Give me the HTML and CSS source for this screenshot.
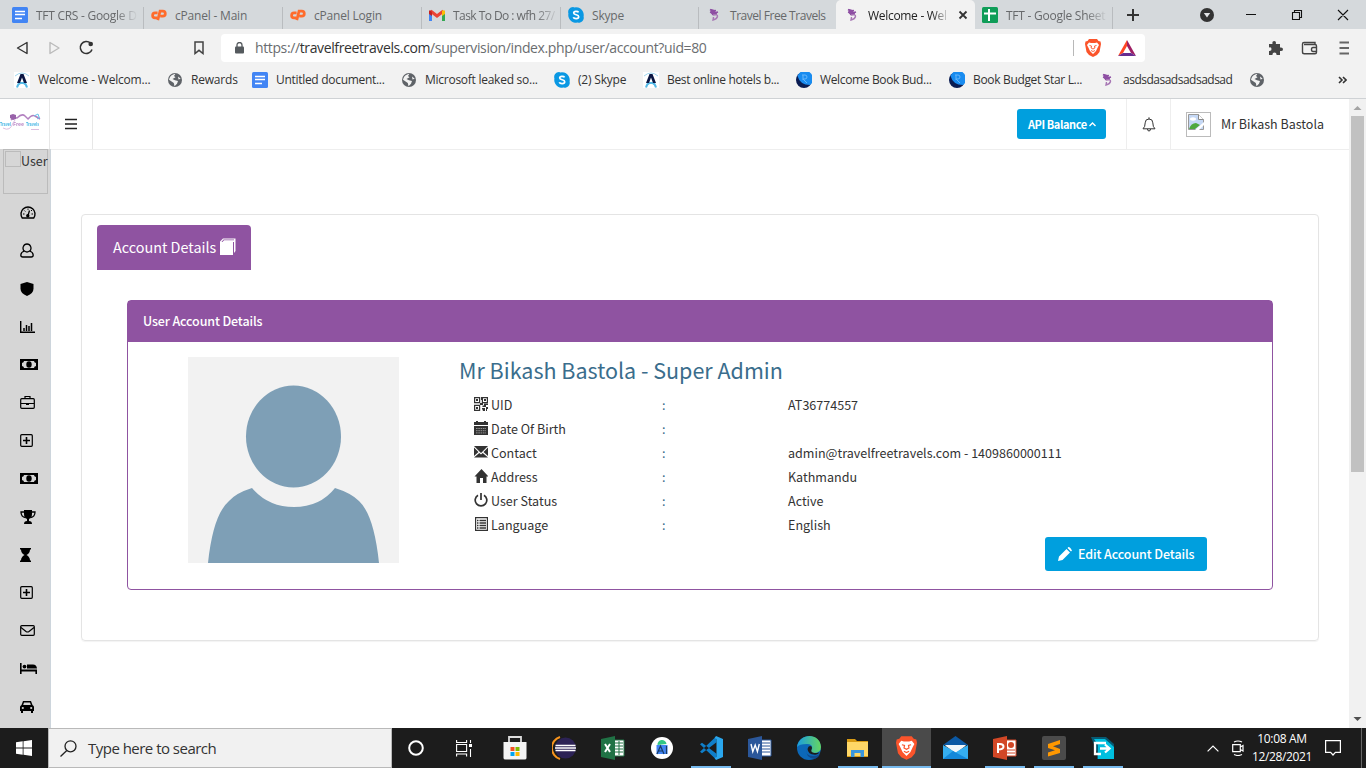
FILE: index.html
```html
<!DOCTYPE html>
<html lang="en">
<head>
<meta charset="utf-8">
<title>Welcome - Welcome Travel Free Travels</title>
<link rel="stylesheet" href="styles.css">
</head>
<body>
<svg class="defs" width="0" height="0">
  <symbol id="docs" viewBox="0 0 16 16"><rect width="16" height="16" rx="1.5" fill="#4285f4"/><path d="M3 4.500h10M3 7.500h10M3 11.500h7" stroke="#fff" stroke-width="1.500"/></symbol>
  <symbol id="cp" viewBox="0 0 17 12"><g fill="none" stroke="#ff6c2c" stroke-width="2.900"><path d="M7 3.800H4.300a2.600 2.600 0 0 0 0 5.200h2.200"/><path d="M7.200 11.500L9.600 2h3a2.600 2.600 0 0 1 0 5.200h-2.800"/></g></symbol>
  <symbol id="gmail" viewBox="0 0 16 12"><path d="M1.500 12V2" stroke="#4285f4" stroke-width="3"/><path d="M14.500 12V4" stroke="#34a853" stroke-width="3"/><path d="M1.500 2L8 7l6.500-5" fill="none" stroke="#ea4335" stroke-width="3.200"/><path d="M13 1.500h3V5l-3 2z" fill="#fbbc04"/><path d="M0 1.500h2L3 4v3L0 5z" fill="#c5221f"/></symbol>
  <symbol id="skype" viewBox="0 0 16 16"><path d="M5 0a5 5 0 0 0-4.600 6.500A7.800 7.800 0 0 0 9.500 15.600 5 5 0 0 0 15.600 9.500 7.800 7.800 0 0 0 6.500.4 5 5 0 0 0 5 0z" fill="#0a98e3"/><path d="M10.600 5.400C9.800 4 5.700 3.800 5.700 6c0 2.300 5 1.300 5 3.700 0 2.500-4.700 2.300-5.400.5" fill="none" stroke="#fff" stroke-width="1.700"/></symbol>
  <symbol id="tft" viewBox="0 0 16 16"><path d="M4 2.500l3 1.500 3-.5M4 5l4 1 4-1M6 7.500l5-.5" fill="none" stroke="#8e4fa3" stroke-width="1.700"/><path d="M5 2l4 1 .5 4-3 1-2-2z" fill="#8e4fa3"/><path d="M7 8q5-1 4.500 1.500T7 13l.500-3" fill="none" stroke="#a878b5" stroke-width="1.400"/></symbol>
  <symbol id="sheet" viewBox="0 0 16 16"><rect width="16" height="16" rx="1.500" fill="#0f9d58"/><path d="M2 6.500h12M7 2v12" stroke="#fff" stroke-width="2"/></symbol>
  <symbol id="globe" viewBox="0 0 16 16"><circle cx="8" cy="8" r="7" fill="#5f6368"/><path d="M8.500 1.800L7 4l1.500 1.300L5.500 7 8 8.200l3 .8-1 2.800-2.500 2.400L6.800 11 2 7.800C3 4 5 2.500 8.500 1.800zM11 4.500l2.700 2.300-2.200.7z" fill="#f2f2f2"/></symbol>
  <symbol id="agoda" viewBox="0 0 16 16"><rect width="16" height="16" fill="#fff"/><path d="M1 4Q8-2 15 4" fill="none" stroke="#9ed5ee"/><path d="M3 15.500q1-4 3.500-4.500h3q2.500.500 3.500 4.500" fill="none" stroke="#55b9e6" stroke-width="2"/><path d="M3 11L6.500 2h3L13 11h-3L8 5.500 6 11z" fill="#0b1744"/></symbol>
  <symbol id="book" viewBox="0 0 16 16"><circle cx="8" cy="8" r="8" fill="#0a1c52"/><path d="M1.500 4A8 8 0 1 1 14 13Q4 13 1.500 4z" fill="#198cf0"/><path d="M6 3h3a2 2 0 0 1 0 4H7l4 4M7 3v5" stroke="#67b6fa" fill="none"/></symbol>
  <symbol id="lion" viewBox="0 0 16 18"><path d="M4 0h8l1.500 2 2 .5L16 5l-1.500 8L12 16l-4 2-4-2-2.500-3L0 5l.5-2.500 2-.5z" fill="#fb542b"/><path d="M4 3.500l2 .6h4l2-.6 2 2.500-1.300 2.500L11 12l-3 3-3-3-1.700-3.500L2 6z" fill="#fff"/><path d="M4.500 6.500l2 .5-.4 2L8 10l1.900-1-.4-2 2-.5M6 11.500l2 1 2-1" fill="none" stroke="#fb542b" stroke-width=".9"/></symbol>
  <symbol id="bank" viewBox="0 0 18 11"><rect width="18" height="11"/><path d="M4 2h10q0 1.500 2 2v3q-2 .5-2 2H4Q4 7.500 2 7V4q2-.5 2-2z" fill="#d6d6d6"/><ellipse cx="9" cy="5.500" rx="2.700" ry="3.200"/></symbol>
  <symbol id="plus" viewBox="0 0 13 13"><rect x=".7" y=".7" width="11.600" height="11.600" rx="1" fill="none" stroke="#000" stroke-width="1.200"/><path d="M6.500 3v7M3 6.500h7" stroke="#000" stroke-width="1.600"/></symbol>
</svg>

<header class="tabs ui">
  <div class="tab t1"><svg class="fav"><use href="#docs"/></svg><span class="fade w102">TFT CRS - Google D</span></div>
  <div class="tab"><svg class="fav cp"><use href="#cp"/></svg><span>cPanel - Main</span></div>
  <div class="tab"><svg class="fav cp"><use href="#cp"/></svg><span>cPanel Login</span></div>
  <div class="tab t4"><svg class="fav gm"><use href="#gmail"/></svg><span class="fade w103">Task To Do : wfh 27/</span></div>
  <div class="tab t5"><svg class="fav"><use href="#skype"/></svg><span>Skype</span></div>
  <div class="tab t6"><svg class="fav"><use href="#tft"/></svg><span>Travel Free Travels</span></div>
  <div class="tab active"><svg class="fav"><use href="#tft"/></svg><span class="fade w82">Welcome - Wel</span><svg class="close" viewBox="0 0 10 10"><path d="M1.500 1.500l7 7m0-7l-7 7" stroke="#333" stroke-width="1.800"/></svg></div>
  <div class="tab t8"><svg class="fav"><use href="#sheet"/></svg><span class="fade w102">TFT - Google Sheet</span></div>
  <svg class="newtab" viewBox="0 0 12 12"><path d="M6 0v12M0 6h12" stroke="#333" stroke-width="2"/></svg>
  <svg class="winctl" viewBox="0 0 154 16"><circle cx="8" cy="8" r="7" fill="#333"/><path d="M4.800 6h6.400L8 10.500z" fill="#e3e5e7"/><g fill="none" stroke="#111" stroke-width="1.100"><path d="M47 7.500h10M93.500 5.500h7v7h-7zM95.500 5.500v-2h7v7h-2M139 3l10 10m0-10L139 13"/></g></svg>
</header>
<nav class="toolbar ui">
  <svg class="navico" viewBox="0 0 80 16"><g fill="none" stroke="#333" stroke-width="1.400"><path d="M11 2.500L1.500 8l9.500 5.500z" stroke-linejoin="round"/><path d="M34 2.500L43 8l-9 5.500z" stroke="#bbb" stroke-linejoin="round"/><path d="M74.500 3.200A6 6 0 1 0 76 9.500" stroke-width="1.600"/></g><circle cx="74.700" cy="4" r="2.300" fill="#333"/></svg>
  <svg class="mark" viewBox="0 0 10 14"><path d="M1 1h8v11.500L5 9.300 1 12.500z" fill="none" stroke="#444" stroke-width="1.500"/></svg>
  <div class="url">
    <svg class="lock" viewBox="0 0 9 12"><rect y="4.500" width="9" height="7" rx="1" fill="#555a5e"/><path d="M2 5V3a2.500 2.500 0 0 1 5 0v2" fill="none" stroke="#555a5e" stroke-width="1.300"/></svg>
    <span class="addr">https://<b>travelfreetravels.com</b>/supervision/index.php/user/account?uid=80</span>
    <i></i><svg class="shield"><use href="#lion"/></svg>
    <svg class="bat" viewBox="0 0 18 16"><path d="M9 0L0 16l5-3 4-7z" fill="#ff4724"/><path d="M9 0l9 16-5-3-4-7z" fill="#9e1f63"/><path d="M0 16h18l-5-3H5z" fill="#662d91"/></svg>
  </div>
  <svg class="tools" viewBox="0 0 82 16"><path d="M1 4h3.500q-.7-3 1.700-3t1.600 3H12v3.500q3-.5 3 1.700T12 11v4H8.500q.3-2.500-2-2.500T4.500 15H1v-4q2.500.3 2.500-2T1 7.500z" fill="#444"/><g fill="none" stroke="#444" stroke-width="1.400"><path d="M47 4.500v-2H36q-1.500 0-1.500 1.500v8q0 1.800 1.800 1.800H47q1.500 0 1.500-1.500V6q0-1.500-1.500-1.500H36M49 7.500h-4q-1.500 0-1.500 2t1.500 2H49"/><path d="M71.500 2.500h9.500M71.500 8h9.500M71.500 13.500h9.500" stroke="#666" stroke-width="1.800"/></g></svg>
</nav>
<nav class="bookmarks ui">
  <a class="b1"><svg><use href="#agoda"/></svg>Welcome - Welcom...</a>
  <a class="b2"><svg><use href="#globe"/></svg>Rewards</a>
  <a class="b3"><svg><use href="#docs"/></svg>Untitled document...</a>
  <a class="b4"><svg><use href="#globe"/></svg>Microsoft leaked so...</a>
  <a class="b5"><svg><use href="#skype"/></svg>(2) Skype</a>
  <a class="b6"><svg><use href="#agoda"/></svg>Best online hotels b...</a>
  <a class="b7"><svg><use href="#book"/></svg>Welcome Book Bud...</a>
  <a class="b8"><svg><use href="#book"/></svg>Book Budget Star L...</a>
  <a class="b9"><svg><use href="#tft"/></svg>asdsdasadsadsadsad</a>
  <a class="b10"><svg><use href="#globe"/></svg></a>
  <svg class="more" viewBox="0 0 9 8"><path d="M1 1l3 3-3 3M5 1l3 3-3 3" fill="none" stroke="#333" stroke-width="1.600"/></svg>
</nav>

<div class="page">
  <div class="site">
    <div class="topbar">
      <div class="logo"><svg viewBox="0 0 49 24"><path d="M11 8q3-3 6-2 5-5 8-2l3 3q4-5 7-3l5 3" fill="none" stroke="#a56bb5" stroke-width="1.500"/><path d="M10 3l3-1 3 1v4l-3 1-3-2z" fill="#87479b"/><path d="M34 4l4-2 1 3M37 7l3-2" stroke="#4db9e8" fill="none"/><text class="lt" x="0" y="14" fill="#25a9e0" textLength="11" lengthAdjust="spacingAndGlyphs">Travel</text><text class="lt" x="13" y="14" fill="#b076bd" textLength="11" lengthAdjust="spacingAndGlyphs">Free</text><text class="lt" x="26" y="14" fill="#25a9e0" textLength="13" lengthAdjust="spacingAndGlyphs">Travels</text><path d="M3 16q7 4 10-5l2-3M31 17.500h8" stroke="#d5b3db" fill="none"/></svg></div>
      <div class="burger"><svg viewBox="0 0 12 12"><path d="M0 1.500h12M0 6h12M0 10.500h12" stroke="#222" stroke-width="1.600"/></svg></div>
      <div class="grow"></div>
      <button class="api"><span>API Balance</span><svg viewBox="0 0 7 5"><path d="M.5 4l3-3 3 3" fill="none" stroke="#fff" stroke-width="1.400"/></svg></button>
      <div class="bell"><svg viewBox="0 0 14 15"><path d="M1 11.800Q3.200 10 3.200 5.800 3.200 2 7 2t3.800 3.800q0 4.200 2.200 6zM7 2V.3M5.500 12q0 2 1.500 2t1.500-2" fill="none" stroke="#333"/></svg></div>
      <div class="account"><div class="broken"><svg viewBox="0 0 16 16"><path d="M.5.500h10l5 5v10H.5z" fill="#c5d8f5" stroke="#999"/><path d="M1 15q2-6 7-6l4 2-5 4z" fill="#4fa83d"/><ellipse cx="5" cy="5" rx="3" ry="1.700" fill="#fff"/><path d="M10.500.500v5h5" fill="#fff" stroke="#888"/><path d="M7 16l9-8v3l-5 5z" fill="#fff"/></svg></div><span>Mr Bikash Bastola</span></div>
    </div>
    <div class="body">
      <aside>
        <div class="user"><i></i><span>User</span></div>
        <div class="si"><svg width="16" height="13" viewBox="0 0 16 13"><path d="M2.300 12A7 7 0 1 1 13.700 12z" fill="none" stroke="#000" stroke-width="1.400"/><path d="M8 9.500l1.500-5" stroke="#000" stroke-width="1.300"/><circle cx="7.800" cy="9.700" r="1.700"/><path d="M3 8h1.500M4.300 4.500l1 1M8 2.500v1.300M11.500 8H13M11 5l1-1" stroke="#000"/></svg></div>
        <div class="si"><svg width="14" height="15" viewBox="0 0 14 15"><path d="M4.500 8.500C1.500 5.500 3.500 1 7 1s5.500 4.500 2.500 7.500M4.500 8Q1 9 .8 12q0 2 2 2h8.400q2 0 2-2Q13 9 9.500 8 7 10 4.500 8z" fill="none" stroke="#000" stroke-width="1.300"/></svg></div>
        <div class="si"><svg width="14" height="14" viewBox="0 0 14 14"><path d="M7 0l6.500 2v4.500q0 5-6.500 7.500Q.500 11.500.5 6.500V2z"/></svg></div>
        <div class="si"><svg width="15" height="12" viewBox="0 0 15 12"><path d="M.7 0v11.300H15" fill="none" stroke="#000" stroke-width="1.400"/><path d="M4 7v3M6.500 4v6M9 5v5M11.500 2v8" stroke="#000" stroke-width="1.500"/></svg></div>
        <div class="si"><svg width="18" height="11"><use href="#bank"/></svg></div>
        <div class="si"><svg width="15" height="13" viewBox="0 0 15 13"><rect x=".7" y="2.700" width="13.600" height="9.600" rx="1" fill="none" stroke="#000" stroke-width="1.200"/><path d="M5 2.500v-2h5v2M1 7.500h13" stroke="#000" fill="none" stroke-width="1.200"/><path d="M6 7h3v2H6z"/></svg></div>
        <div class="si"><svg width="13" height="13"><use href="#plus"/></svg></div>
        <div class="si"><svg width="18" height="11"><use href="#bank"/></svg></div>
        <div class="si"><svg width="16" height="14" viewBox="0 0 16 14"><path d="M4 0h8v4q0 4-3 5v2q3 0 3 3H4q0-3 3-3V9Q4 8 4 4z"/><path d="M4 2H1q0 5 4.500 5.500M12 2h3q0 5-4.500 5.500" fill="none" stroke="#000" stroke-width="1.300"/></svg></div>
        <div class="si"><svg width="11" height="14" viewBox="0 0 11 14"><path d="M0 0h11v1.500h-1Q10 5 6.500 7q3.500 2 3.500 5.500h1V14H0v-1.500h1Q1 9 4.500 7 1 5 1 1.500H0z"/></svg></div>
        <div class="si"><svg width="13" height="13"><use href="#plus"/></svg></div>
        <div class="si"><svg width="15" height="11" viewBox="0 0 15 11"><rect x=".7" y=".7" width="13.600" height="9.600" rx="1" fill="none" stroke="#000" stroke-width="1.200"/><path d="M1 2.500l5 4q1.500 1 3 0l5-4" fill="none" stroke="#000" stroke-width="1.200"/></svg></div>
        <div class="si"><svg width="17" height="11" viewBox="0 0 17 11"><path d="M0 0h1.600v6.500H17V11h-1.600V8.500H1.600V11H0z"/><circle cx="4.500" cy="3.600" r="1.900"/><path d="M7 1.500h6q3.500 0 4 4H7z"/></svg></div>
        <div class="si"><svg width="14" height="12" viewBox="0 0 14 12"><path d="M3 0h8l1.500 4Q14 5 14 6v4h-1v2h-2v-2H3v2H1v-2H0V6q0-1 1.500-2zM4 1.500L3.200 4h7.600L10 1.500z" fill-rule="evenodd"/><circle cx="2.800" cy="7" r="1.100" fill="#d6d6d6"/><circle cx="11.200" cy="7" r="1.100" fill="#d6d6d6"/></svg></div>
      </aside>
      <main>
        <section class="outer">
          <div class="acct"><span>Account Details</span><svg viewBox="0 0 16 17"><path d="M0 3.500L3 .5h12.500V13L14 15V4H2.500L4 2.200h10v-.7H3.500L1.500 4H13v13H0z" fill="#fff"/></svg></div>
          <section class="inner">
            <h3><span>User Account Details</span></h3>
            <div class="content">
              <svg class="avatar" viewBox="0 0 211 206"><rect width="211" height="206" fill="#f2f2f2"/><ellipse cx="105.500" cy="79.500" rx="47.500" ry="51" fill="#7e9fb6"/><path d="M20 206Q25 158 41 144Q48 136 64 131Q80 150 106 150T147 131Q163 136 171 144Q186 158 191 206z" fill="#7e9fb6"/></svg>
              <div class="info">
                <h2><span>Mr Bikash Bastola - Super Admin</span></h2>
                <div class="row"><svg viewBox="0 0 14 14"><g fill="none" stroke="#333" stroke-width="1.200"><path d="M.6.600h5v5h-5zM8.400.600h5v5h-5zM.6 8.400h5v5h-5z"/></g><path d="M2 2h2v2H2zM10 2h2v2h-2zM2 10h2v2H2zM7 0h1v3H7zM6 6h3v2H6zM10 6.500h4V8h-2v2H8.500V8.500H10zM8 11h3v3H8.800v-1.500H8zM12 10h2v2h-1v2h-1z" fill="#333"/></svg><span class="k">UID</span><b>:</b><span>AT36774557</span></div>
                <div class="row"><svg viewBox="0 0 14 14"><path d="M0 1h2V0h2v1h6V0h2v1h2v3H0zM0 5h14v9H0z" fill="#333"/><path d="M2 7.500h10M2 9.700h10M2 11.900h10" stroke="#bbb" stroke-width=".7" stroke-dasharray="1.600 .7"/></svg><span class="k">Date Of Birth</span><b>:</b><span></span></div>
                <div class="row"><svg viewBox="0 0 14 14"><path d="M0 1h14L7 8zM0 2.500L4.500 7 0 11zM14 2.500L9.500 7l4.500 4zM5.300 8L7 9.600 8.700 8l5.300 4.500H0z" fill="#333"/></svg><span class="k">Contact</span><b>:</b><span>admin@travelfreetravels.com - 1409860000111</span></div>
                <div class="row"><svg viewBox="0 0 14 14"><path d="M7.500 0L14.500 7.500h-2V14H9V9H6v5H2.500V7.500h-2z" fill="#333"/></svg><span class="k">Address</span><b>:</b><span>Kathmandu</span></div>
                <div class="row"><svg viewBox="0 0 14 14"><path d="M4 2.200a5.800 5.800 0 1 0 6 0M7 0v7" fill="none" stroke="#333" stroke-width="1.700"/></svg><span class="k">User Status</span><b>:</b><span>Active</span></div>
                <div class="row"><svg viewBox="0 0 14 14"><path d="M1.600.600h11.800v12.800H1.600z" fill="none" stroke="#333" stroke-width="1.200"/><path d="M3 3.500h1.500M3 6h1.500M3 8.500h1.500M3 11h1.500M5.500 3.500H12M5.500 6H12M5.500 8.500H12M5.500 11H12" stroke="#333" stroke-width="1.400"/></svg><span class="k">Language</span><b>:</b><span>English</span></div>
                <button class="edit"><svg viewBox="0 0 14 14"><path d="M0 14l1-4.500L8.500 2 12 5.500 4.500 13zM9.500 1l1-1q1.500-.3 3.500 3.500l-1 1z" fill="#fff"/></svg><span>Edit Account Details</span></button>
              </div>
            </div>
          </section>
        </section>
      </main>
    </div>
  </div>
  <div class="scroll"><svg viewBox="0 0 17 17"><path d="M4.500 11h8L8.500 7z" fill="#a3a3a3"/></svg><div class="thumb"></div><svg class="down" viewBox="0 0 17 17"><path d="M4.500 6h8l-4 4z" fill="#505050"/></svg></div>
</div>

<footer class="taskbar ui">
  <div class="start"><svg viewBox="0 0 16 16"><path d="M0 2.200L6.700 1.300v6.200H0zM7.500 1.200L16 0v7.500H7.500zM0 8.400h6.700v6.300L0 13.800zM7.500 8.400H16V16l-8.500-1.200z" fill="#fff"/></svg></div>
  <div class="search"><svg viewBox="0 0 17 17"><circle cx="10.500" cy="6.300" r="5.500" fill="none" stroke="#222" stroke-width="1.300"/><path d="M6.800 10.500L.5 16.500" stroke="#222" stroke-width="1.300"/></svg><span>Type here to search</span></div>
  <div class="app a48"><svg width="16" height="16" viewBox="0 0 16 16"><circle cx="8" cy="8" r="6.800" fill="none" stroke="#fff" stroke-width="2"/></svg></div>
  <div class="app a50"><svg width="17" height="17" viewBox="0 0 17 17"><g fill="none" stroke="#fff" stroke-width="1.100"><path d="M.6 4.500h10v7H.6zM.6 0v2.500h10V0M.6 16.500V14h10v2.500M14.500 0v3M14.500 9v8"/></g><path d="M13 4h3v3h-3z" fill="#fff"/></svg></div>
  <div class="app"><svg width="24" height="24" viewBox="0 0 24 24"><path d="M6 7V1h12v6" fill="none" stroke="#ddd" stroke-width="1.800"/><path d="M.5 6h23v16q0 1.500-2 1.500h-19Q.5 23.500.5 22z" fill="#f4f4f4"/><path d="M7.500 11h4v4h-4z" fill="#f25022"/><path d="M12.500 11h4v4h-4z" fill="#7fba00"/><path d="M7.500 16h4v4h-4z" fill="#00a4ef"/><path d="M12.500 16h4v4h-4z" fill="#ffb900"/></svg></div>
  <div class="app"><svg width="24" height="24" viewBox="0 0 24 24"><path d="M8 1A11.500 11.500 0 0 0 8 23" stroke="#f7941e" stroke-width="2" fill="none"/><circle cx="13.500" cy="12" r="10.500" fill="#2c2255"/><path d="M3.500 9.500h20M3 12h21M3.500 14.500h20" stroke="#fff" stroke-width="1.400"/></svg></div>
  <div class="app"><svg width="24" height="24" viewBox="0 0 24 24"><path d="M13 4h10v16H13z" fill="#fff" stroke="#207245"/><path d="M14 7h8M14 10h8M14 13h8M14 16h8M18 5v14" stroke="#207245"/><path d="M0 3l14-3v24L0 21z" fill="#207245"/><path d="M4 8l5 8m0-8l-5 8" stroke="#fff" stroke-width="2"/></svg></div>
  <div class="app"><svg width="24" height="24" viewBox="0 0 24 24"><circle cx="12" cy="12" r="11" fill="#fff"/><path d="M6.500 9h11v9h-11z" fill="#4285f4"/><path d="M7.500 9a4.500 4.500 0 0 1 9-1z" fill="#31c785"/><path d="M7 18l3.500-8 3.500 8M8.500 15h4M16.500 10v8" fill="none" stroke="#173b63" stroke-width="1.200"/></svg></div>
  <div class="app on"><svg width="24" height="24" viewBox="0 0 24 24"><path d="M17.500 1.500v4.800L3 17.300 1 15.700 15.500 2zM17.500 22.500v-4.800L3 6.700 1 8.300 15.500 22z" fill="#0f7fca"/><path d="M17 0l7 3v18l-7 3-1.500-2 2-1V3l-2-1z" fill="#2aa7ee"/></svg></div>
  <div class="app"><svg width="24" height="24" viewBox="0 0 24 24"><path d="M13 4h10v16H13z" fill="#fff" stroke="#2b579a"/><path d="M14 7h8M14 10h8M14 13h8M14 16h8" stroke="#2b579a"/><path d="M0 3l14-3v24L0 21z" fill="#2b579a"/><path d="M3 8l1.800 7.500L7.200 9l2.200 6.500L11.300 8" fill="none" stroke="#fff" stroke-width="1.400"/></svg></div>
  <div class="app"><svg width="24" height="24" viewBox="0 0 24 24"><defs><linearGradient id="eg"><stop stop-color="#1a9de0"/><stop offset="1" stop-color="#65d660"/></linearGradient></defs><circle cx="12" cy="12" r="12" fill="#0c68b8"/><path d="M0 11C2-3 23-4 24 11q0 6-8 6-4-1-1-4 1-5-5-5Q2 8 0 11z" fill="url(#eg)"/><path d="M9 12q-1 8 7 8 4 0 7-2-1 3-5 5Q8 22 9 12z" fill="#114a8b"/><path d="M10.500 13q1-4 4-2.500 1 1.500 0 3-1 3 3 3.500 2 .3 5-.8-1 2-4 2.500Q11 19 10.500 13z" fill="#1c1c1c"/></svg></div>
  <div class="app on"><svg width="23" height="20" viewBox="0 0 23 20"><path d="M1 1h8l2 2h11v16H1z" fill="#d99b14"/><path d="M1 4h21v14H1z" fill="#ffd767"/><path d="M5 19v-7h13v7h-3.500v-4h-6v4z" fill="#3a96dd"/></svg></div>
  <div class="app on current"><svg width="21" height="24"><use href="#lion"/></svg></div>
  <div class="app"><svg width="25" height="24" viewBox="0 0 25 24"><path d="M0 9l12.500-9L25 9z" fill="#0c59a4"/><path d="M2 9h21l-10 8z" fill="#f2f7fa"/><path d="M0 9l12.500 7L25 9v14H0z" fill="#35aef0"/><path d="M2 9.500h21l-10.500 7z" fill="#f2f7fa"/><path d="M0 23l10-8 15 8z" fill="#1488da"/></svg></div>
  <div class="app on"><svg width="24" height="24" viewBox="0 0 24 24"><path d="M13 4h10v16H13z" fill="#fff" stroke="#d24726"/><circle cx="18" cy="9" r="3" fill="#d24726"/><path d="M14 14h8M14 17h8" stroke="#d24726"/><path d="M0 3l14-3v24L0 21z" fill="#d24726"/><path d="M5 17V8h2q3.500 0 3.500 2.700T5 13.500" fill="none" stroke="#fff" stroke-width="2"/></svg></div>
  <div class="app on"><svg width="24" height="24" viewBox="0 0 24 24"><rect width="24" height="24" rx="2" fill="#4b4b4b"/><path d="M6 8l12-4v4l-7 2.300L18 13v4L6 20.500v-4l7-2.300L6 12z" fill="#ff9800"/></svg></div>
  <div class="app on"><svg width="24" height="24" viewBox="0 0 24 24"><path d="M0 1h15l8 7v15H6V16z" fill="#075a73"/><path d="M3 3h11l9 8v12H7V9z" fill="#00bfdf"/><path d="M15 7H4v11h6M9 12.500h9M14 8.500l4.500 4-4.500 4" fill="none" stroke="#fff" stroke-width="2.300"/></svg></div>
  <div class="grow"></div>
  <svg class="chev" viewBox="0 0 12 7"><path d="M.6 6.400L6 1l5.400 5.400" fill="none" stroke="#fff" stroke-width="1.200"/></svg>
  <svg class="cam" viewBox="0 0 12 16"><path d="M.7 4.700h7.600v7H.7zM8.300 7L11 5.500v5.500L8.300 9.500M2 2q4-2 8 0M2 14.500q4 2 8 0" fill="none" stroke="#fff" stroke-width="1.200"/></svg>
  <div class="clock"><span>10:08 AM</span><span>12/28/2021</span></div>
  <svg class="note" viewBox="0 0 16 16"><path d="M.6.600h14.800v11.800h-5L8 15l-2.400-2.600h-5z" fill="none" stroke="#fff" stroke-width="1.200"/></svg>
  <div class="show"></div>
</footer>
</body>
</html>
```
FILE: styles.css
```css
* { box-sizing: border-box; }
body { margin: 0; width: 1366px; height: 768px; overflow: hidden; display: flex; flex-direction: column; background: #fff; font-family: "Noto Sans CJK SC", sans-serif; color: #333; }
svg { display: block; flex: none; }
.defs { position: absolute; }
.ui { font-family: "Open Sans", "Noto Sans", sans-serif; font-size: 12px; letter-spacing: -0.2px; }
.grow { flex: 1; }
span { white-space: nowrap; }

.tabs { height: 29px; display: flex; align-items: center; background: #d5d9dc; color: #67696b; }
.tab { width: 139px; height: 29px; display: flex; align-items: center; gap: 8px; padding: 1px 0 0 7px; flex: none; background: linear-gradient(#b9bcbf, #b9bcbf) right 7px / 1px 22px no-repeat; }
.tab.t1 { width: 144px; padding-left: 12px; letter-spacing: -0.27px; }
.tab.t4 { letter-spacing: -0.55px; }
.tab.t5 { width: 138px; }
.tab.t6 { width: 137px; background: none; letter-spacing: -0.47px; }
.tab.t8 { width: 138px; letter-spacing: -0.25px; }
.tab.active { background: #f2f2f2; border-radius: 5px 5px 0 0; color: #222; padding-left: 8px; letter-spacing: -0.3px; }
.fav { width: 16px; height: 16px; }
.fav.cp { height: 12px; }
.fav.gm { height: 12px; }
.fade { overflow: hidden; -webkit-mask-image: linear-gradient(90deg, #000 78%, transparent); mask-image: linear-gradient(90deg, #000 78%, transparent); }
.w102 { width: 102px; }
.w103 { width: 106px; }
.w82 { width: 82px; }
.close { width: 10px; height: 10px; }
.newtab { width: 12px; height: 12px; margin-left: 14px; }
.winctl { width: 154px; height: 16px; margin-left: 60px; }

.toolbar { height: 38px; display: flex; align-items: center; background: #f2f2f2; }
.navico { width: 80px; height: 16px; margin-left: 16px; }
.mark { width: 10px; height: 14px; margin-left: 98px; }
.url { width: 924px; height: 28px; margin-left: 17px; padding-left: 14px; border-radius: 4px; background: #fff; display: flex; align-items: center; }
.lock { width: 9px; height: 12px; }
.addr { width: 818px; margin: -1px 0 0 11px; font-size: 14px; letter-spacing: -0.38px; color: #6a6d70; }
.addr b { font-weight: 400; color: #333; }
.url i { width: 1px; height: 16px; background: #b8b8b8; }
.shield { width: 16px; height: 18px; margin-left: 11px; }
.bat { width: 18px; height: 16px; margin-left: 17px; }
.tools { width: 82px; height: 16px; margin-left: 123px; }

.bookmarks { height: 32px; padding: 0 0 6px 14px; display: flex; align-items: center; background: #f2f2f2; border-bottom: 1px solid #cfd2d5; color: #333; }
.bookmarks a { display: flex; align-items: center; gap: 8px; flex: none; white-space: nowrap; }
.bookmarks a svg { width: 16px; height: 16px; }
.b1 { width: 153px; }
.b2 { width: 85px; }
.b3 { width: 149px; letter-spacing: -0.3px; }
.b4 { width: 153px; letter-spacing: -0.26px; }
.b5 { width: 89px; }
.b6 { width: 153px; letter-spacing: -0.33px; }
.b7 { width: 153px; letter-spacing: -0.36px; }
.b8 { width: 150px; letter-spacing: -0.33px; }
.b9 { width: 150px; letter-spacing: -0.5px; }
.b10 { width: 89px; }
.more { width: 9px; height: 8px; }

.page { height: 629px; display: flex; }
.site { width: 1349px; display: flex; flex-direction: column; }
.topbar { height: 51px; display: flex; border-bottom: 1px solid #eee; }
.logo { width: 50px; border-right: 1px solid #e7e7e7; display: flex; align-items: center; }
.logo svg { width: 49px; height: 24px; opacity: .85; }
.lt { font-size: 5px; font-weight: 700; }
.burger { width: 43px; border-right: 1px solid #e7e7e7; display: flex; align-items: center; justify-content: center; }
.burger svg { width: 12px; height: 12px; }
button { border: 0; font-family: inherit; color: #fff; background: #009fde; border-radius: 3px; display: flex; align-items: center; padding: 0; }
.api { width: 89px; height: 30px; margin: 10px 20px 0 0; padding-left: 11px; gap: 2px; font-size: 11px; font-weight: 700; letter-spacing: -0.43px; }
.api svg { width: 7px; height: 5px; }
.bell { width: 45px; border: solid #eee; border-width: 0 1px; display: flex; align-items: center; justify-content: center; }
.bell svg { width: 14px; height: 15px; }
.account { width: 178px; display: flex; align-items: center; padding-left: 15px; gap: 10px; font-size: 12.5px; }
.account span { margin-top: -2px; }
.broken { width: 25px; height: 25px; border: 1px solid #bbb; padding: 1px; }
.broken svg { width: 16px; height: 16px; }

.body { height: 578px; display: flex; }
aside { width: 51px; height: 579px; margin-top: -1px; background: #d6d6d6; border-right: 1px solid #cdd5dc; overflow: hidden; }
.user { width: 45px; height: 45px; margin-left: 3px; border: 1px solid #bbb; padding: 1px; display: flex; font-size: 12.5px; line-height: 20px; }
.user i { width: 16px; height: 16px; border: 1px solid #bbb; flex: none; }
.si { height: 38px; padding: 0 0 1px 20px; display: flex; align-items: center; }
main { padding: 64px 0 0 30px; }
.outer { width: 1238px; height: 427px; border: 1px solid #e4e4e4; box-shadow: 0 1px 1px rgba(0, 0, 0, .05); border-radius: 4px; padding: 10px 0 0 15px; }
.acct { width: 154px; height: 45px; background: #8f53a1; color: #fff; border-radius: 4px 4px 0 0; padding: 0 0 2px 16px; display: flex; align-items: center; gap: 4px; font-size: 14.4px; }
.acct svg { width: 16px; height: 17px; margin-top: -1px; }
.inner { width: 1146px; height: 290px; margin: 30px 0 0 30px; border: 1px solid #8f53a1; border-radius: 4px; }
h3 { margin: 0; height: 41px; padding-left: 15px; background: #8f53a1; color: #fff; font-size: 12.5px; font-weight: 500; letter-spacing: -0.13px; line-height: 40px; }
.content { display: flex; padding: 15px 0 0 60px; }
.avatar { width: 211px; height: 206px; }
.info { margin-left: 60px; width: 750px; }
h2 { margin: 0 0 11px; height: 25px; font-size: 21.5px; line-height: 25px; font-weight: 400; color: #3a6d8c; }
.row { height: 24px; display: grid; grid-template-columns: 14px 174px 126px auto; align-items: center; padding-left: 15px; font-size: 12.55px; line-height: 24px; }
.row svg { width: 14px; height: 14px; margin-top: -3px; }
.row .k { padding-left: 3px; }
.row b { font-weight: 400; color: #3a6d8c; }
.edit { width: 162px; height: 34px; margin-left: 586px; padding: 0 0 1px 13px; gap: 6px; font-size: 12.5px; font-weight: 500; letter-spacing: -0.1px; }
.edit svg { width: 14px; height: 14px; }
.scroll { width: 17px; background: #f1f1f1; display: flex; flex-direction: column; align-items: center; }
.scroll svg { width: 17px; height: 17px; }
.thumb { width: 13px; height: 356px; background: #c1c1c1; }
.down { margin-top: auto; }

.taskbar { height: 40px; display: flex; align-items: center; background: #1c1c1c; color: #fff; }
.start { width: 48px; padding-left: 16px; }
.start svg { width: 16px; height: 16px; }
.search { width: 344px; height: 40px; background: #f1f1f1; border: 1px solid #b9b9b9; display: flex; align-items: center; padding-left: 11px; gap: 11px; font-size: 15px; letter-spacing: -0.52px; color: #333; }
.search svg { width: 17px; height: 17px; }
.app { width: 49px; height: 40px; display: flex; align-items: center; justify-content: center; background-repeat: no-repeat; flex: none; }
.a48 { width: 48px; }
.a50 { width: 50px; padding-right: 2px; }
.on { background-image: linear-gradient(#76b9ed, #76b9ed); background-size: 40px 2px; background-position: center bottom; }
.current { background-color: #4a4a4a; background-size: 49px 2px; }
.chev { width: 12px; height: 7px; }
.cam { width: 12px; height: 16px; margin-left: 13px; }
.clock { width: 76px; display: flex; flex-direction: column; align-items: center; line-height: 18px; letter-spacing: -0.35px; }
.note { width: 16px; height: 16px; margin: 0 20px 0 5px; }
.show { width: 5px; height: 40px; border-left: 1px solid #666; }
```
